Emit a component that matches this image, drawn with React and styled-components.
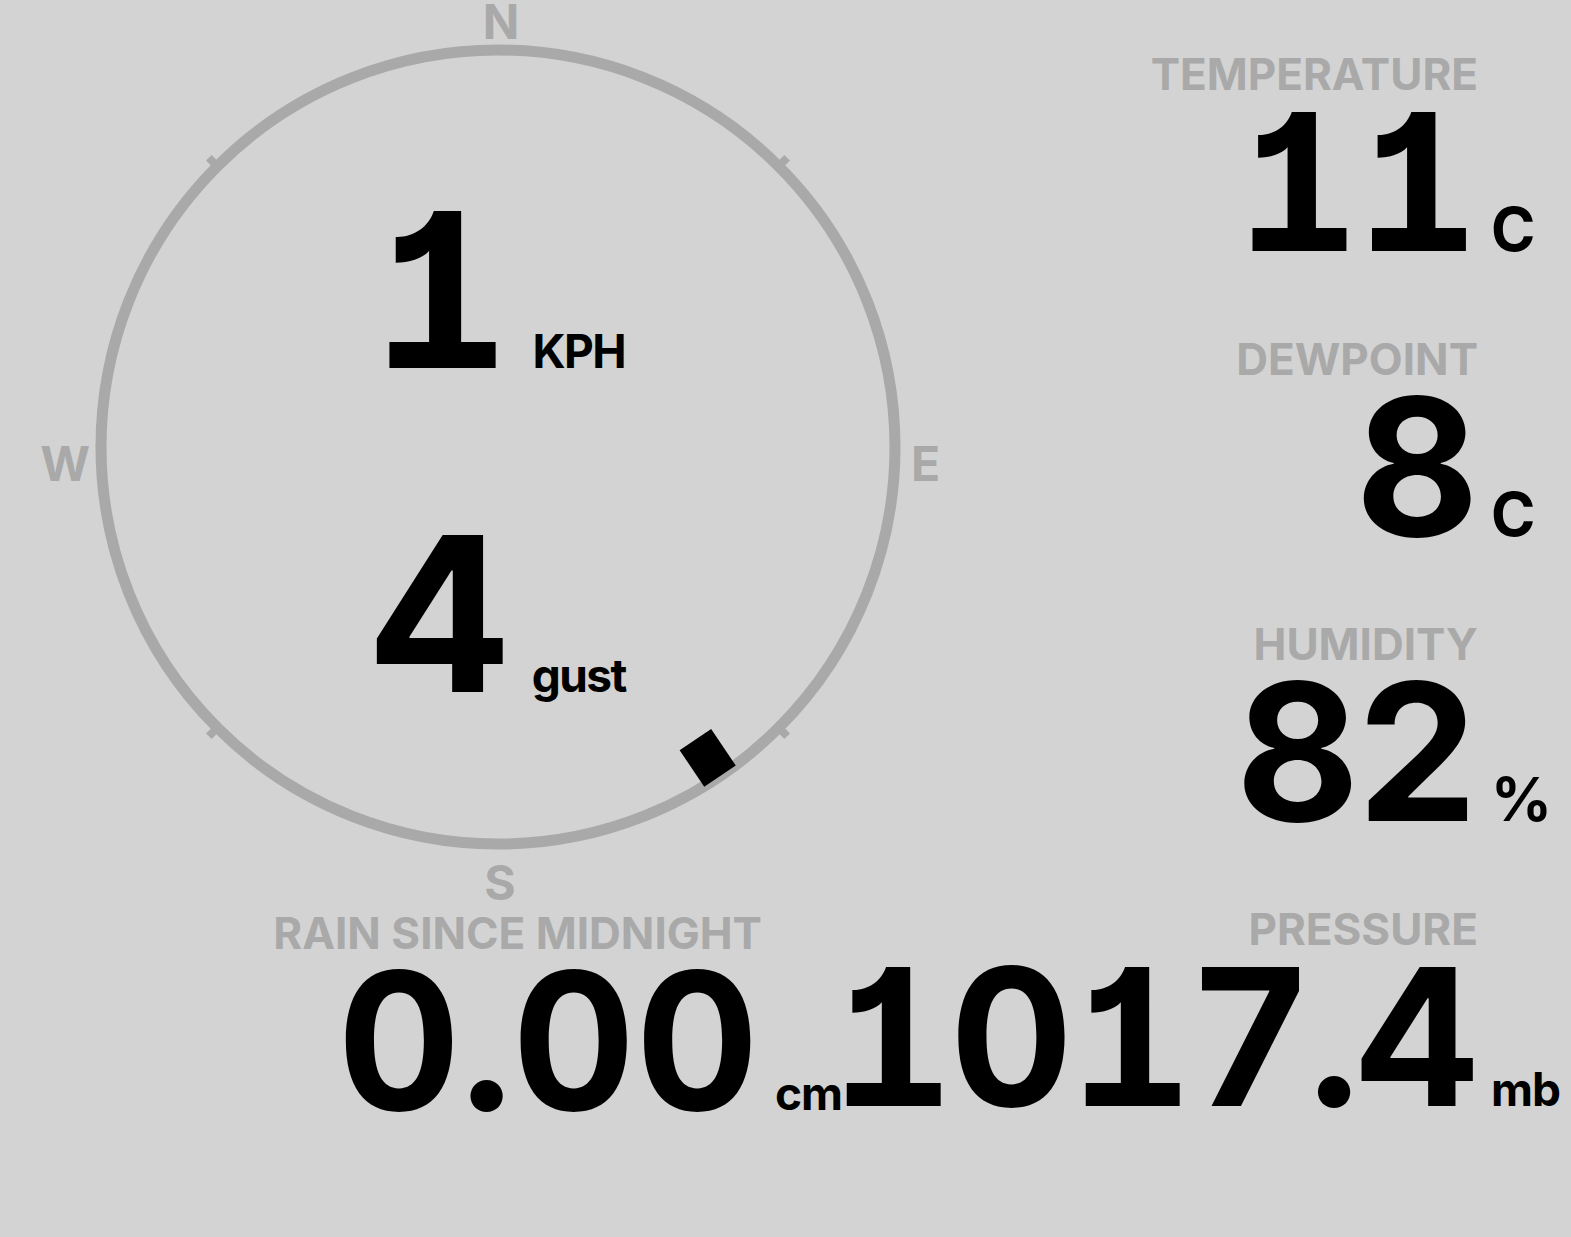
import React from 'react';
import styled, { createGlobalStyle } from 'styled-components';

const GlobalStyle = createGlobalStyle`
  html, body {
    margin: 0;
    padding: 0;
    background: #d3d3d3;
  }
  body {
    font-family: Inter, "Liberation Sans", sans-serif;
    font-weight: 700;
    color: #000;
  }
`;

const Page = styled.main`
  display: grid;
  grid-template-columns: 960px minmax(0, 1fr);
  min-height: 100vh;
  overflow: hidden;
`;

const LeftColumn = styled.section`
  display: flex;
  flex-direction: column;
`;

const RightColumn = styled.section`
  display: flex;
  flex-direction: column;
  align-items: flex-end;
  gap: 78px;
  padding-top: 52px;
  min-width: 0;
`;

const Compass = styled.div`
  display: grid;
  grid-template-columns: 95px 806px auto;
  grid-template-rows: 44px 806px auto;
`;

const Cardinal = styled.div`
  font-size: 48px;
  line-height: 44px;
  color: #a9a9a9;
  grid-column: ${p => p.col};
  grid-row: ${p => p.row};
  justify-self: ${p => p.justify || 'center'};
  align-self: ${p => p.align || 'center'};
  padding: ${p => p.pad || '0'};
`;

const Dial = styled.div`
  grid-column: 2;
  grid-row: 2;
  position: relative;
  display: flex;
  flex-direction: column;
  align-items: center;
  justify-content: center;
  gap: 165px;
  padding-top: 18px;
`;

const Ring = styled.svg`
  position: absolute;
  inset: 0;
  width: 100%;
  height: 100%;
`;

const Reading = styled.div`
  position: relative;
  display: flex;
  align-items: baseline;
`;

const BigNumber = styled.span`
  font-size: ${p => (p.large ? '216px' : '191px')};
  line-height: 150px;
  letter-spacing: ${p => (p.tight ? '-4px' : '0')};
  font-variant-numeric: tabular-nums;
  font-feature-settings: "tnum" 1, "cv01" 1;
`;

const SmallUnit = styled.span`
  font-size: 46px;
  line-height: 1;
  letter-spacing: -1.5px;
  margin-left: 22px;
`;

const Stat = styled.div`
  display: flex;
  flex-direction: column;
  align-items: flex-end;
`;

const Label = styled.div`
  font-size: 44px;
  line-height: 1;
  color: #a9a9a9;
  margin-right: 93px;
  white-space: nowrap;
`;

const ValueRow = styled.div`
  display: flex;
  align-items: baseline;
  margin-top: 11px;
  white-space: nowrap;
`;

const Unit = styled.span`
  width: 96px;
  box-sizing: border-box;
  padding-left: 16px;
  font-size: ${p => (p.small ? '46px' : '60px')};
  letter-spacing: ${p => (p.small ? '-1px' : '0')};
  line-height: 1;
`;

const RainRow = styled.div`
  display: flex;
  justify-content: flex-end;
  padding-right: 105px;
  margin-top: 6px;
`;

const WIND_DIRECTION = 146;
const TICKS = [45, 135, 225, 315];

function CompassRing({ direction }) {
  return (
    <Ring viewBox="0 0 806 806">
      <circle cx="403" cy="403" r="397" fill="none" stroke="#a9a9a9" strokeWidth="11" />
      {TICKS.map(a => (
        <rect
          key={a}
          x="-4"
          y="-409"
          width="8"
          height="16"
          fill="#a9a9a9"
          transform={`translate(403 403) rotate(${a})`}
        />
      ))}
      <rect
        x="-19"
        y="-397"
        width="38"
        height="44"
        fill="#000"
        transform={`translate(403 403) rotate(${direction})`}
      />
    </Ring>
  );
}

function StatBlock({ label, value, unit, small, tight = true }) {
  return (
    <Stat>
      <Label>{label}</Label>
      <ValueRow>
        <BigNumber tight={tight}>{value}</BigNumber>
        <Unit small={small}>{unit}</Unit>
      </ValueRow>
    </Stat>
  );
}

export default function App() {
  return (
    <>
      <GlobalStyle />
      <Page>
        <LeftColumn>
          <Compass>
            <Cardinal col={2} row={1} align="end" pad="0 0 0 6px">N</Cardinal>
            <Cardinal col={1} row={2} justify="end" pad="34px 5px 0 0">W</Cardinal>
            <Dial>
              <CompassRing direction={WIND_DIRECTION} />
              <Reading>
                <BigNumber large>1</BigNumber>
                <SmallUnit>KPH</SmallUnit>
              </Reading>
              <Reading>
                <BigNumber large>4</BigNumber>
                <SmallUnit>gust</SmallUnit>
              </Reading>
            </Dial>
            <Cardinal col={3} row={2} justify="start" pad="34px 0 0 10px">E</Cardinal>
            <Cardinal col={2} row={3} align="start" pad="11px 0 0 4px">S</Cardinal>
          </Compass>
          <RainRow>
            <StatBlock label="RAIN SINCE MIDNIGHT" value="0.00" unit="cm" small tight={false} />
          </RainRow>
        </LeftColumn>
        <RightColumn>
          <StatBlock label="TEMPERATURE" value="11" unit="C" />
          <StatBlock label="DEWPOINT" value="8" unit="C" />
          <StatBlock label="HUMIDITY" value="82" unit="%" />
          <StatBlock label="PRESSURE" value="1017.4" unit="mb" small />
        </RightColumn>
      </Page>
    </>
  );
}
